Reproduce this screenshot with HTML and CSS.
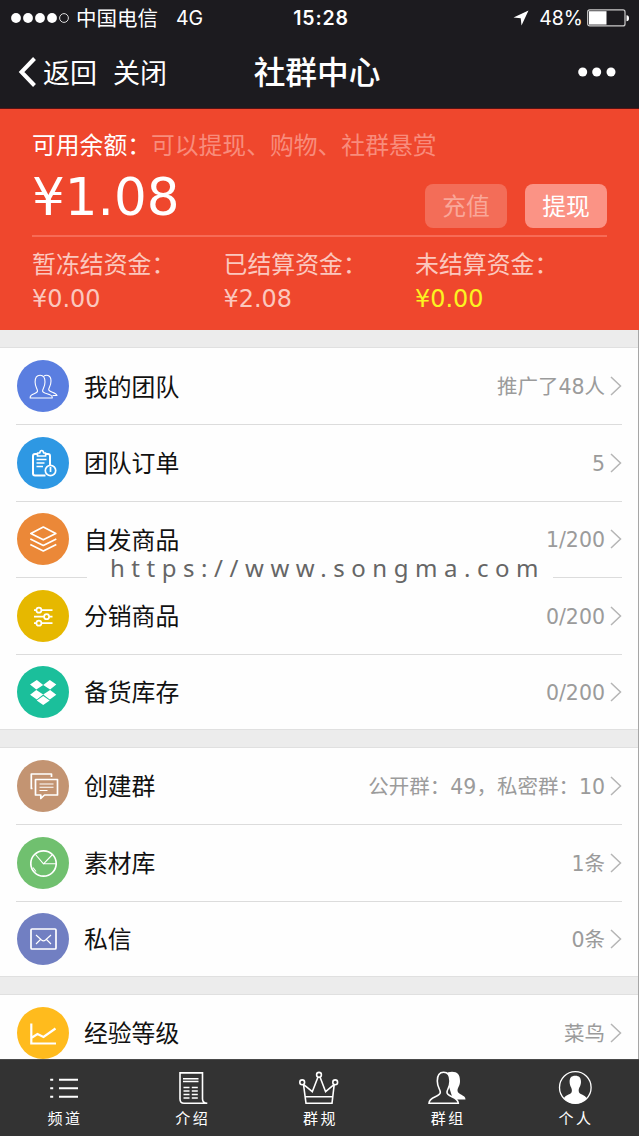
FILE: index.html
```html
<!DOCTYPE html>
<html lang="zh-CN">
<head>
<meta charset="utf-8">
<title>社群中心</title>
<link rel="stylesheet" href="styles.css">
</head>
<body>
<div class="screen">
  <header class="top">
    <div class="status">
      <div class="status-left">
        <svg class="signal" width="58" height="12" viewBox="0 0 58 12"><g fill="#fff"><circle cx="5" cy="6" r="4.9"/><circle cx="17" cy="6" r="4.9"/><circle cx="29" cy="6" r="4.9"/><circle cx="41" cy="6" r="4.9"/></g><circle cx="53" cy="6" r="4.4" fill="none" stroke="#ddd"/></svg>
        <span class="carrier">中国电信</span>
        <span class="network">4G</span>
      </div>
      <div class="clock">15:28</div>
      <div class="status-right">
        <svg width="16" height="16" viewBox="0 0 16 16"><path d="M15.500.5 8.500 15.500 7.700 8.300.5 7.500Z" fill="#fff"/></svg>
        <span class="percent">48%</span>
        <svg class="battery" width="43" height="18" viewBox="0 0 43 18"><rect x=".7" y=".9" width="37.3" height="16" rx="2" fill="none" stroke="#ccc" stroke-width="1.2"/><path d="M2 2.2h17.5v13.4H2z" fill="#fff"/><path d="M39.5 6.2q2.500 0 2.500 3t-2.500 3z" fill="#fff"/></svg>
      </div>
    </div>
    <nav class="nav">
      <div class="nav-left">
        <svg width="20" height="32" viewBox="0 0 20 32"><path d="M16.500 2.500 3.500 16l13 13.500" fill="none" stroke="#fff" stroke-width="4"/></svg>
        <span class="back">返回</span>
        <span class="close">关闭</span>
      </div>
      <h1 class="title">社群中心</h1>
      <svg class="more" width="38" height="10" viewBox="0 0 38 10"><g fill="#fff"><circle cx="4.700" cy="5" r="4.500"/><circle cx="18.700" cy="5" r="4.500"/><circle cx="33" cy="5" r="4.500"/></g></svg>
    </nav>
  </header>

  <section class="balance">
    <p class="caption">可用余额：<span class="hint">可以提现、购物、社群悬赏</span></p>
    <div class="amount-row">
      <div class="amount">¥1.08</div>
      <div class="buttons">
        <span class="btn btn-muted">充值</span>
        <span class="btn">提现</span>
      </div>
    </div>
    <div class="funds">
      <div class="fund"><span>暂冻结资金：</span><span>¥0.00</span></div>
      <div class="fund"><span>已结算资金：</span><span>¥2.08</span></div>
      <div class="fund"><span>未结算资金：</span><span class="pending">¥0.00</span></div>
    </div>
  </section>

  <main class="lists">
    <section class="list">
      <div class="row">
        <svg class="icon blue" viewBox="0 0 52 52"><g class="thin"><path d="M13.2 38v-1c.3-3.8 7.3-2.8 7.3-6 0-2-2.4-4-2.4-9 0-4.500 1.500-6.700 5-6.700s4.900 2.200 4.900 6.700c0 5-2.400 7-2.400 9 0 3.200 9.300 2.200 9.600 6v1z"/><path d="M27 16.200c1.500-1.500 7-1.800 7 4.800 0 5-2.300 6.500-2.300 8.500 0 3 7.500 2.400 8.300 6h-4.500"/></g></svg>
        <span class="label">我的团队</span><span class="value">推广了48人</span><svg class="arrow" viewBox="0 0 12 20"><path d="m1 1 9.500 9L1 19"/></svg>
      </div>
      <div class="row">
        <svg class="icon azure" viewBox="0 0 52 52"><g class="line"><path d="M28.500 38.500H18q-2 0-2-2V19q0-2 2-2h2.500M28.500 17H31q2 0 2 2v9" stroke-width="2"/><path d="M20.500 19v-3h2.300q.2-2.500 1.900-2.500t1.900 2.500h2v3zM19.500 22.500h10M19.500 26h8M19.500 29.500h6.500"/><circle cx="33.500" cy="33.500" r="5.200"/><path d="M33.500 30v5"/></g></svg>
        <span class="label">团队订单</span><span class="value">5</span><svg class="arrow" viewBox="0 0 12 20"><path d="m1 1 9.500 9L1 19"/></svg>
      </div>
      <div class="row">
        <svg class="icon orange" viewBox="0 0 52 52"><g class="line"><path d="m26.300 14 12.500 6.500-12.500 6.300-12.500-6.300z"/><path d="m13.300 26 13 6.500 13-6.500M13.300 31.500l13 6.500 13-6.500"/></g></svg>
        <span class="label">自发商品</span><span class="value">1/200</span><svg class="arrow" viewBox="0 0 12 20"><path d="m1 1 9.500 9L1 19"/></svg>
      </div>
      <div class="row">
        <svg class="icon yellow" viewBox="0 0 52 52"><g class="line"><path d="M17 20.200h2.300m5.200 0H35.500M17 26.700h10m5.200 0h3.300M17 33.200h2.300m5.200 0H35.500"/><circle cx="21.900" cy="20.200" r="2.500"/><circle cx="29.600" cy="26.700" r="2.500"/><circle cx="21.900" cy="33.200" r="2.500"/></g></svg>
        <span class="label">分销商品</span><span class="value">0/200</span><svg class="arrow" viewBox="0 0 12 20"><path d="m1 1 9.500 9L1 19"/></svg>
      </div>
      <div class="row">
        <svg class="icon green" viewBox="0 0 52 52"><path fill="#fff" d="m19.800 14 6.400 4.900-6.900 4.500-6.300-4.900zM32.800 14l6.500 4.500-6.200 4.900-6.900-4.500zM19.300 24l6.900 4.500-6.400 4.900-6.700-4.700zM33.100 24l6.200 4.700-6.500 4.700-6.600-4.900zM26.200 30l6.500 4.600-6.500 4.500-6.500-4.500z"/></svg>
        <span class="label">备货库存</span><span class="value">0/200</span><svg class="arrow" viewBox="0 0 12 20"><path d="m1 1 9.500 9L1 19"/></svg>
      </div>
      <div class="watermark">https://www.songma.com</div>
    </section>

    <section class="list">
      <div class="row">
        <svg class="icon brown" viewBox="0 0 52 52"><g class="line"><path d="M15.500 28.500h-1.200V14H34.500v3"/><path d="M18.500 19.500h22V35h-13l-3.700 3.500V35h-5.300z"/></g><path class="thin" d="M22.500 24h14M22.500 27.300h14M22.500 30.500h8"/></svg>
        <span class="label">创建群</span><span class="value">公开群：49，私密群：10</span><svg class="arrow" viewBox="0 0 12 20"><path d="m1 1 9.500 9L1 19"/></svg>
      </div>
      <div class="row">
        <svg class="icon leaf" viewBox="0 0 52 52"><circle class="line" cx="26.500" cy="26.500" r="12.700"/><path class="thin" d="m18.500 17.500 8 9.300 9-9.300M26.500 26.800h12.500M16 30.500l3 4"/></svg>
        <span class="label">素材库</span><span class="value">1条</span><svg class="arrow" viewBox="0 0 12 20"><path d="m1 1 9.500 9L1 19"/></svg>
      </div>
      <div class="row">
        <svg class="icon indigo" viewBox="0 0 52 52"><rect class="line" x="14" y="16" width="25" height="20" rx="1"/><path class="thin" d="m19 22 5.500 5q2 1.700 4 0l5.500-5M19 31l4.500-4.500M34 31 29.500 26.500"/></svg>
        <span class="label">私信</span><span class="value">0条</span><svg class="arrow" viewBox="0 0 12 20"><path d="m1 1 9.500 9L1 19"/></svg>
      </div>
    </section>

    <section class="list">
      <div class="row">
        <svg class="icon amber" viewBox="0 0 52 52"><path d="M14.300 16.500v20H39M15 30.500l5.500-3.500 6 3L38.500 21.500" fill="none" stroke="#fff" stroke-width="2.200"/></svg>
        <span class="label">经验等级</span><span class="value">菜鸟</span><svg class="arrow" viewBox="0 0 12 20"><path d="m1 1 9.500 9L1 19"/></svg>
      </div>
    </section>
  </main>

  <footer class="tabs">
    <div class="tab">
      <svg viewBox="0 0 40 36"><path d="M15 9.700h19M15 18.200h19M15 26.700h19M6.200 9.700h3M6.200 18.200h3M6.200 26.700h3" stroke-width="2"/></svg>
      <span>频道</span>
    </div>
    <div class="tab">
      <svg viewBox="0 0 40 36"><path d="M30.500 29V2.900H8V29q0 4.300 4 4.300h23.300q-4.800-.3-4.800-4.300z"/><path d="M11 8.700h15.500M11 11.500h15.500M11.500 17.500h6M19.800 17.500h6M11.500 21h6M19.800 21h6M11.500 24.500h6M19.800 24.500h6M11.500 28h6M19.800 28h6"/></svg>
      <span>介绍</span>
    </div>
    <div class="tab">
      <svg viewBox="0 0 40 36"><path d="M4.500 14.500 7 33.300h26l2.200-18.800-8.600 7.200-5.500-14.500h-2.200L13.300 21.700zM6 26.700h28"/><g fill="#333"><circle cx="3.200" cy="12.300" r="2.400"/><circle cx="20" cy="4.800" r="2.400"/><circle cx="36.200" cy="12.300" r="2.400"/></g></svg>
      <span>群规</span>
    </div>
    <div class="tab">
      <svg viewBox="0 0 40 36"><path d="M18 4q3-2.300 7-2.300c5.500 0 8 2.800 8 9.300 0 5-2.500 6.500-2.500 9.500 0 4.500 8 4 8 9H26z" fill="#fff" stroke="none"/><path d="M2 33.300c0-6.800 11.300-6 11.300-11 0-3-3-5-3-11.300 0-5.500 1.800-8.700 6.300-8.700s6.400 3.200 6.400 8.700c0 6.300-3 8.300-3 11.300 0 5 11 4.200 11.300 11z" fill="#333"/></svg>
      <span>群组</span>
    </div>
    <div class="tab">
      <svg viewBox="0 0 40 36"><circle cx="20.300" cy="17.500" r="15.800" stroke-width="1.300"/><path d="M20.300 5.800c4 0 5.700 2 5.700 6 0 4.500-2.300 5.500-2.300 9 0 4.500 6.300 3.300 8 7.500-2.500 3-6.500 5.300-11.400 5.300S11.300 31.300 8.900 28.300c1.700-4.200 8-3 8-7.500 0-3.500-2.300-4.500-2.300-9 0-4 1.700-6 5.700-6z" fill="#fff" stroke="none"/></svg>
      <span>个人</span>
    </div>
  </footer>
</div>
</body>
</html>
```
FILE: styles.css
```css
* { box-sizing: border-box; }

body {
  margin: 0;
  font-family: "DejaVu Sans", "Noto Sans CJK SC", sans-serif;
  background: #ececec;
}

.screen {
  width: 639px;
  height: 1136px;
  display: flex;
  flex-direction: column;
  overflow: hidden;
}

.top {
  height: 109px;
  flex: none;
  background: #1c1b1f;
  border-bottom: 1px solid #571314;
  color: #fff;
  font-family: "Noto Sans CJK SC", sans-serif;
}

.status {
  height: 36px;
  display: grid;
  grid-template-columns: 1fr auto 1fr;
  align-items: center;
  padding: 0 9px 0 11px;
}

.status-left, .status-right { display: flex; align-items: center; }
.status-right { justify-content: flex-end; }
.carrier { margin-left: 7px; padding-bottom: 2px; font-size: 20.500px; line-height: 32px; }
.network { margin-left: 18px; font: 19.500px/36px Inter, sans-serif; }
.clock { padding-left: 1px; font: 600 19.500px/36px Inter, sans-serif; letter-spacing: .8px; }
.percent { margin: 0 4px 0 10px; font: 19.500px/36px Inter, sans-serif; }

.nav {
  height: 72px;
  display: grid;
  grid-template-columns: 1fr auto 1fr;
  align-items: center;
  padding: 0 23px 0 18px;
  font-size: 27px;
}

.nav-left { display: flex; align-items: center; }
.nav-left span { padding-bottom: 2px; }
.back { margin: 0 16px 0 5px; }
.title { margin: 0; padding-bottom: 4px; font-size: 31.700px; font-weight: 500; line-height: 42px; }
.more { justify-self: end; }

.balance {
  height: 221px;
  flex: none;
  padding: 23px 32px 0;
  background: #ef472d;
  color: #fff;
}

.caption { margin: 0; font-size: 23.800px; line-height: 28px; white-space: nowrap; }
.hint { color: #f88c7c; }

.amount-row {
  height: 77px;
  display: flex;
  justify-content: space-between;
  border-bottom: 2px solid #f76b56;
}

.amount { font-size: 51.500px; line-height: 74px; }
.buttons { display: flex; gap: 18px; padding-top: 24px; }

.btn {
  width: 82px;
  height: 44px;
  padding-top: 2px;
  border-radius: 8px;
  background: #fb9385;
  font-size: 23.800px;
  line-height: 43px;
  text-align: center;
}

.btn-muted { background: #f36d58; color: #f9a799; }

.funds { display: grid; grid-template-columns: repeat(3, 191.500px); padding-top: 11px; }
.fund { display: flex; flex-direction: column; font-size: 23.900px; line-height: 34px; color: #fbc7be; white-space: nowrap; }
.fund .pending { color: #fbf321; }

.lists {
  flex: 1;
  min-height: 0;
  overflow: hidden;
  display: flex;
  flex-direction: column;
  gap: 17px;
  padding-top: 17px;
  border-right: 1px solid #a6a6a6;
}

.list {
  position: relative;
  flex: none;
  background: #fefefe;
  border-top: 1px solid #e0e0e0;
  border-bottom: 1px solid #e0e0e0;
}

.row {
  height: 76.600px;
  margin: 0 16px 0 16px;
  padding-left: 1px;
  display: flex;
  align-items: center;
  border-bottom: 1px solid #dcdcdc;
}

.row:first-child { height: 77px; }
.row:nth-child(5) { height: 74.200px; border-bottom: 0; }
.list:nth-child(2) .row:last-child { height: 74.400px; border-bottom: 0; }

.icon { width: 52px; height: 52px; flex: none; border-radius: 50%; }
.line, .thin { fill: none; stroke: #fff; stroke-width: 1.700; stroke-linejoin: round; }
.thin { stroke-width: 1.100; }
.blue { background: #5a7ee0; }
.azure { background: #2e98e3; }
.orange { background: #eb8838; }
.yellow { background: #e6b800; }
.green { background: #1bbf9b; }
.brown { background: #c39472; }
.leaf { background: #70c06f; }
.indigo { background: #717fc2; }
.amber { background: #ffbb1d; }

.label { margin-left: 15px; padding-top: 3px; flex: 1; font-size: 23.800px; line-height: 26px; color: #111; }
.value { padding-top: 2px; font-size: 20.500px; line-height: 24px; color: #9b9b9b; white-space: nowrap; }
.arrow { width: 12px; height: 20px; margin-left: 5px; fill: none; stroke: #b5b5b5; stroke-width: 1.500; }

/* Site address overlaid on the first list */
.watermark {
  position: absolute;
  left: 87px;
  top: 207px;
  width: 466px;
  height: 25px;
  padding-left: 23px;
  background: #fefefe;
  color: #666;
  font: 24px/25px "Noto Sans", sans-serif;
  letter-spacing: 6.540px;
  white-space: nowrap;
}

.tabs {
  height: 77px;
  flex: none;
  display: grid;
  grid-template-columns: repeat(5, 1fr);
  background: #333;
  border-top: 1px solid #4a4a4a;
}

.tab {
  display: flex;
  flex-direction: column;
  align-items: center;
  padding-top: 10px;
  color: #fff;
  font-size: 15px;
  line-height: 26px;
  letter-spacing: 2.500px;
}

.tab span { padding-left: 2px; }
.tab svg { width: 40px; height: 36px; fill: none; stroke: #fff; stroke-width: 1.600; overflow: visible; }
```
